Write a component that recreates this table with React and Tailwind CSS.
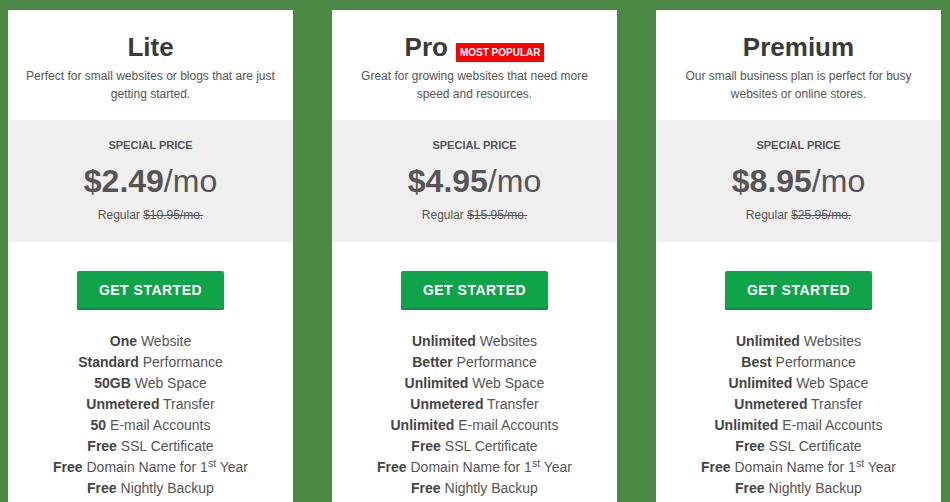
import React from 'react';

const plans = [
  {
    name: 'Lite',
    desc: 'Perfect for small websites or blogs that are just getting started.',
    price: '$2.49',
    regular: '$10.95/mo.',
    features: [
      ['One', 'Website'],
      ['Standard', 'Performance'],
      ['50GB', 'Web Space'],
      ['Unmetered', 'Transfer'],
      ['50', 'E-mail Accounts'],
      ['Free', 'SSL Certificate'],
      ['Free', 'Domain Name for 1', true],
      ['Free', 'Nightly Backup'],
    ],
  },
  {
    name: 'Pro',
    popular: true,
    desc: 'Great for growing websites that need more speed and resources.',
    price: '$4.95',
    regular: '$15.95/mo.',
    features: [
      ['Unlimited', 'Websites'],
      ['Better', 'Performance'],
      ['Unlimited', 'Web Space'],
      ['Unmetered', 'Transfer'],
      ['Unlimited', 'E-mail Accounts'],
      ['Free', 'SSL Certificate'],
      ['Free', 'Domain Name for 1', true],
      ['Free', 'Nightly Backup'],
    ],
  },
  {
    name: 'Premium',
    desc: 'Our small business plan is perfect for busy websites or online stores.',
    price: '$8.95',
    regular: '$25.95/mo.',
    features: [
      ['Unlimited', 'Websites'],
      ['Best', 'Performance'],
      ['Unlimited', 'Web Space'],
      ['Unmetered', 'Transfer'],
      ['Unlimited', 'E-mail Accounts'],
      ['Free', 'SSL Certificate'],
      ['Free', 'Domain Name for 1', true],
      ['Free', 'Nightly Backup'],
    ],
  },
];

// One pricing column
const PlanCard = ({ plan }) => (
  <div className="w-[285px] h-[520px] shrink-0 bg-white flex flex-col">
    {/* Header */}
    <div className="pt-[22px] px-[15px] text-center">
      <div className="flex items-end justify-center gap-[8px]">
        <h2 className="text-[26px] leading-[30px] font-bold text-[#3a3a3a]">{plan.name}</h2>
        {plan.popular && (
          <span className="h-[19px] px-[4px] bg-[#ff0000] text-white text-[10px] font-bold leading-[19px]">MOST POPULAR</span>
        )}
      </div>
      <p className="mt-[5px] text-[12px] leading-[18px] text-[#555]">{plan.desc}</p>
    </div>

    {/* Price band */}
    <div className="mt-[17px] bg-[#efefef] pt-[17px] pb-[18px] text-center">
      <div className="text-[11px] leading-[16px] font-bold text-[#555]">SPECIAL PRICE</div>
      <div className="mt-[8px] text-[32px] leading-[40px] text-[#555]">
        <span className="font-bold">{plan.price}</span>/mo
      </div>
      <div className="mt-[5px] text-[12px] leading-[18px] text-[#555]">
        Regular <span className="line-through">{plan.regular}</span>
      </div>
    </div>

    {/* CTA */}
    <div className="mt-[29px] flex justify-center">
      <button className="w-[147px] h-[39px] rounded-[2px] bg-[#0fa34a] shadow-[inset_0_-2px_0_#0b8c3e] text-white text-[14px] font-bold tracking-[0.5px]">
        GET STARTED
      </button>
    </div>

    {/* Features */}
    <ul className="mt-[21px] text-center text-[14px] leading-[21px] text-[#555]">
      {plan.features.map(([b, rest, sup], i) => (
        <li key={i}>
          <span className="font-bold text-[#444]">{b}</span> {rest}
          {sup && (
            <>
              <sup>st</sup> Year
            </>
          )}
        </li>
      ))}
    </ul>
  </div>
);

export default function App() {
  return (
    <div
      className="w-[950px] h-[502px] overflow-hidden bg-[#4c8944] flex gap-[39px] pl-[8px] pt-[10px]"
      style={{ fontFamily: '"Liberation Sans", Arial, sans-serif' }}
    >
      {plans.map((p) => (
        <PlanCard key={p.name} plan={p} />
      ))}
    </div>
  );
}
